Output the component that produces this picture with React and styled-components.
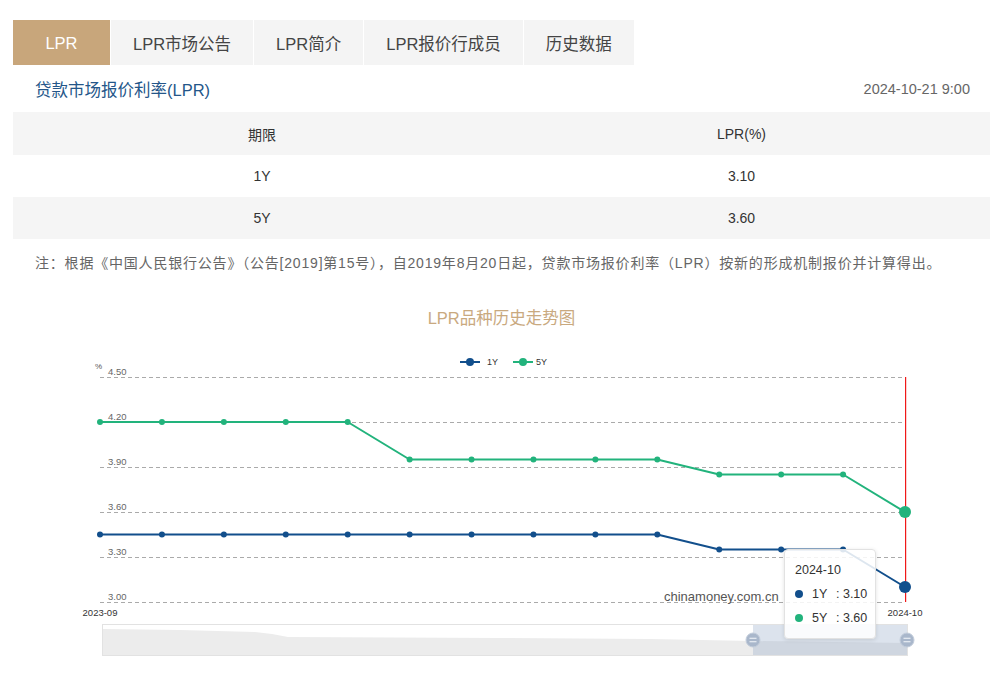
import React from 'react';
import styled, { createGlobalStyle } from 'styled-components';

const GlobalStyle = createGlobalStyle`
  html, body { margin: 0; padding: 0; background: #fff; }
  body {
    font-family: "Liberation Sans", "Noto Sans CJK SC", sans-serif;
    color: #333;
  }
`;

const Page = styled.div`
  width: 977px;
  padding: 20px 0 0 13px;
`;

const TabBar = styled.div`
  display: flex;
  height: 45px;
`;

const Tab = styled.div`
  min-width: 97px;
  box-sizing: border-box;
  padding: 1px 22px 0;
  display: flex;
  align-items: center;
  justify-content: center;
  font-size: 16.5px;
  background: ${p => (p.$active ? '#c8a67b' : '#f4f4f4')};
  color: ${p => (p.$active ? '#fff' : '#444')};
  & + & { border-left: 1px solid #fff; }
`;

const TitleRow = styled.div`
  height: 47px;
  display: flex;
  align-items: center;
  justify-content: space-between;
  padding: 0 20px 0 22px;
`;

const Title = styled.div`
  font-size: 16.5px;
  color: #245689;
`;

const DateText = styled.div`
  font-size: 14.5px;
  color: #666;
`;

const Table = styled.div`
  display: flex;
  flex-direction: column;
`;

const Row = styled.div`
  display: grid;
  grid-template-columns: 498px 1fr;
  height: ${p => p.$h}px;
  background: ${p => (p.$shade ? '#f5f5f5' : '#fff')};
  font-size: 14px;
  color: #333;
`;

const Cell = styled.div`
  display: flex;
  align-items: center;
  justify-content: center;
  padding-right: ${p => p.$pad || 0}px;
`;

const Note = styled.div`
  height: 48px;
  line-height: 48px;
  padding-left: 22px;
  font-size: 14px;
  letter-spacing: 0.8px;
  color: #666;
  white-space: nowrap;
`;

const ChartTitle = styled.div`
  height: 62px;
  line-height: 62px;
  text-align: center;
  font-size: 16.5px;
  color: #c9a97f;
`;

const ChartArea = styled.div`
  position: relative;
  height: 330px;
`;

const ChartSvg = styled.svg`
  display: block;
  font-family: "Liberation Sans", sans-serif;
`;

const Tooltip = styled.div`
  position: absolute;
  left: 771px;
  top: 200px;
  width: 92px;
  box-sizing: border-box;
  padding: 8px 6px 8px 10px;
  background: rgba(255, 255, 255, 0.86);
  border: 1px solid #e2e2e2;
  border-radius: 4px;
  box-shadow: 0 1px 4px rgba(0, 0, 0, 0.12);
  font-size: 12.5px;
  line-height: 24px;
  color: #333;
  white-space: nowrap;
`;

const TipRow = styled.div`
  display: flex;
  align-items: center;
`;

const Dot = styled.span`
  width: 8px;
  height: 8px;
  border-radius: 50%;
  background: ${p => p.$color};
  margin-right: 9px;
  flex: none;
`;

const TipName = styled.span`
  width: 24px;
  flex: none;
`;

const BLUE = '#124f8c';
const GREEN = '#22b37c';
const RED = '#f01818';

const xs = Array.from({ length: 14 }, (_, i) => 100 + (i * 805) / 13);
const yOf = v => 602 - (v - 3) * 150;
const d1 = [...Array(10).fill(3.45), 3.35, 3.35, 3.35, 3.1];
const d5 = [...Array(5).fill(4.2), ...Array(5).fill(3.95), 3.85, 3.85, 3.85, 3.6];

const grid = [4.5, 4.2, 3.9, 3.6, 3.3, 3.0];

function Series({ data, color }) {
  const pts = data.map((v, i) => `${xs[i].toFixed(1)},${yOf(v).toFixed(1)}`).join(' ');
  return (
    <g>
      <polyline points={pts} fill="none" stroke={color} strokeWidth="2" strokeLinejoin="round" />
      {data.map((v, i) =>
        i === data.length - 1 ? (
          <circle key={i} cx={xs[i]} cy={yOf(v)} r="6" fill={color} />
        ) : (
          <circle key={i} cx={xs[i]} cy={yOf(v)} r="3" fill={color} />
        )
      )}
    </g>
  );
}

function Handle({ x }) {
  return (
    <g>
      <circle cx={x} cy={640} r="7" fill="#a9b7cb" stroke="#c3cddb" strokeWidth="1" />
      <line x1={x - 3.5} x2={x + 3.5} y1={638.3} y2={638.3} stroke="#e8edf3" strokeWidth="1.2" />
      <line x1={x - 3.5} x2={x + 3.5} y1={641.7} y2={641.7} stroke="#e8edf3" strokeWidth="1.2" />
    </g>
  );
}

function Chart() {
  return (
    <ChartSvg width="977" height="330" viewBox="0 0 977 330">
      <g transform="translate(-13,-349)">
        {/* legend */}
        <line x1="460" x2="480" y1="362" y2="362" stroke={BLUE} strokeWidth="2" />
        <circle cx="470" cy="362" r="4" fill={BLUE} />
        <text x="487" y="365" fontSize="9" fill="#333">1Y</text>
        <line x1="513" x2="533" y1="362" y2="362" stroke={GREEN} strokeWidth="2" />
        <circle cx="523" cy="362" r="4" fill={GREEN} />
        <text x="536" y="365" fontSize="9" fill="#333">5Y</text>

        {/* y axis */}
        <text x="95" y="369" fontSize="8" fill="#555">%</text>
        {grid.map(v => (
          <g key={v}>
            <line x1="100" x2="905" y1={yOf(v) + 0.5} y2={yOf(v) + 0.5} stroke="#aaa" strokeWidth="1" strokeDasharray="4 3" />
            <text x="108" y={yOf(v) - 2} fontSize="9.5" fill="#666">{v.toFixed(2)}</text>
          </g>
        ))}

        {/* x axis labels */}
        <text x="100" y="616" fontSize="9.5" fill="#333" textAnchor="middle">2023-09</text>
        <text x="905" y="616" fontSize="9.5" fill="#333" textAnchor="middle">2024-10</text>

        {/* watermark */}
        <text x="664" y="601" fontSize="13" fill="#555">chinamoney.com.cn</text>

        {/* axis pointer */}
        <rect x="905" y="377" width="1.2" height="225" fill={RED} />

        <Series data={d1} color={BLUE} />
        <Series data={d5} color={GREEN} />

        {/* data zoom */}
        <rect x="102.5" y="624.5" width="805" height="31" fill="#fff" stroke="#e2e2e2" strokeWidth="1" />
        <path
          d="M103,629 L180,630 L255,632 L272,634 L288,637 L500,638 L650,639 L753,641 L907,643 L907,655 L103,655 Z"
          fill="#ececec"
        />
        <rect x="753" y="625" width="154" height="30" fill="rgba(150,170,200,0.33)" />
        <Handle x={753} />
        <Handle x={907} />
      </g>
    </ChartSvg>
  );
}

const tabs = ['LPR', 'LPR市场公告', 'LPR简介', 'LPR报价行成员', '历史数据'];

export default function App() {
  return (
    <>
      <GlobalStyle />
      <Page>
        <TabBar>
          {tabs.map((t, i) => (
            <Tab key={t} $active={i === 0}>{t}</Tab>
          ))}
        </TabBar>
        <TitleRow>
          <Title>贷款市场报价利率(LPR)</Title>
          <DateText>2024-10-21 9:00</DateText>
        </TitleRow>
        <Table>
          <Row $h={43} $shade>
            <Cell>期限</Cell>
            <Cell $pad={18}>LPR(%)</Cell>
          </Row>
          <Row $h={42}>
            <Cell>1Y</Cell>
            <Cell $pad={18}>3.10</Cell>
          </Row>
          <Row $h={42} $shade>
            <Cell>5Y</Cell>
            <Cell $pad={18}>3.60</Cell>
          </Row>
        </Table>
        <Note>注：根据《中国人民银行公告》（公告[2019]第15号），自2019年8月20日起，贷款市场报价利率（LPR）按新的形成机制报价并计算得出。</Note>
        <ChartTitle>LPR品种历史走势图</ChartTitle>
        <ChartArea>
          <Chart />
          <Tooltip>
            <div>2024-10</div>
            <TipRow>
              <Dot $color={BLUE} />
              <TipName>1Y</TipName>
              <span>: 3.10</span>
            </TipRow>
            <TipRow>
              <Dot $color={GREEN} />
              <TipName>5Y</TipName>
              <span>: 3.60</span>
            </TipRow>
          </Tooltip>
        </ChartArea>
      </Page>
    </>
  );
}
